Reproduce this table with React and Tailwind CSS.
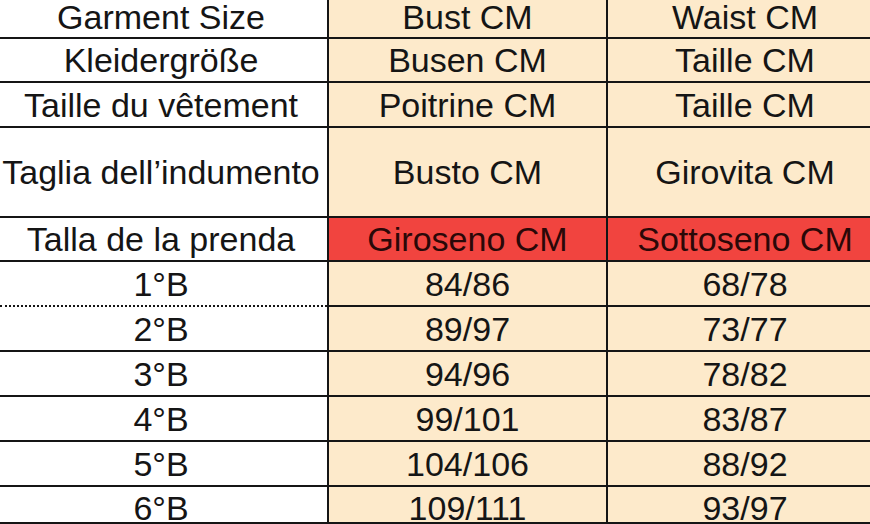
const rows = [
  { h: 'h-[39px] items-start pt-[2px] leading-[30px]', cells: ['Garment Size', 'Bust CM', 'Waist CM'] },
  { h: 'h-[44px] items-center', cells: ['Kleidergröße', 'Busen CM', 'Taille CM'] },
  { h: 'h-[45px] items-center', cells: ['Taille du vêtement', 'Poitrine CM', 'Taille CM'] },
  { h: 'h-[90px] items-center', cells: ['Taglia dell\u2019indumento', 'Busto CM', 'Girovita CM'] },
  { h: 'h-[44px] items-center', cells: ['Talla de la prenda', 'Giroseno CM', 'Sottoseno CM'], red: true },
  { h: 'h-[45px] items-center', cells: ['1°B', '84/86', '68/78'], dotted: true },
  { h: 'h-[45px] items-center', cells: ['2°B', '89/97', '73/77'] },
  { h: 'h-[45px] items-center', cells: ['3°B', '94/96', '78/82'] },
  { h: 'h-[45px] items-center', cells: ['4°B', '99/101', '83/87'] },
  { h: 'h-[45px] items-center', cells: ['5°B', '104/106', '88/92'] },
  { h: 'h-[37px] items-start pt-[4px]', cells: ['6°B', '109/111', '93/97'] },
];

export default function App() {
  return (
    <div className="w-[870px] h-[524px] overflow-hidden bg-white font-['Liberation_Sans',Arial,sans-serif] text-[34px] leading-none text-[#151515]">
      <div className="w-[882px]">
        {rows.map((row, i) => (
          <div key={i} className="grid grid-cols-[327px_279px_276px]">
            <div
              className={`flex justify-center pr-[5px] bg-white border-b-2 border-[#151515] ${row.h} ${
                row.dotted ? 'border-dotted' : 'border-solid'
              } ${i === rows.length - 1 ? 'border-b-0' : ''}`}
            >
              {row.cells[0]}
            </div>
            <div
              className={`flex justify-center border-l-2 border-b-2 border-[#151515] ${row.h} ${
                row.red ? 'bg-[#f1443f] text-[#2a0808]' : 'bg-[#fdeacb]'
              } ${i === rows.length - 1 ? 'border-b-0' : ''}`}
            >
              {row.cells[1]}
            </div>
            <div
              className={`flex justify-center border-l-2 border-b-2 border-[#151515] ${row.h} ${
                row.red ? 'bg-[#f1443f] text-[#2a0808]' : 'bg-[#fdeacb]'
              } ${i === rows.length - 1 ? 'border-b-0' : ''}`}
            >
              {row.cells[2]}
            </div>
          </div>
        ))}
      </div>
    </div>
  );
}
